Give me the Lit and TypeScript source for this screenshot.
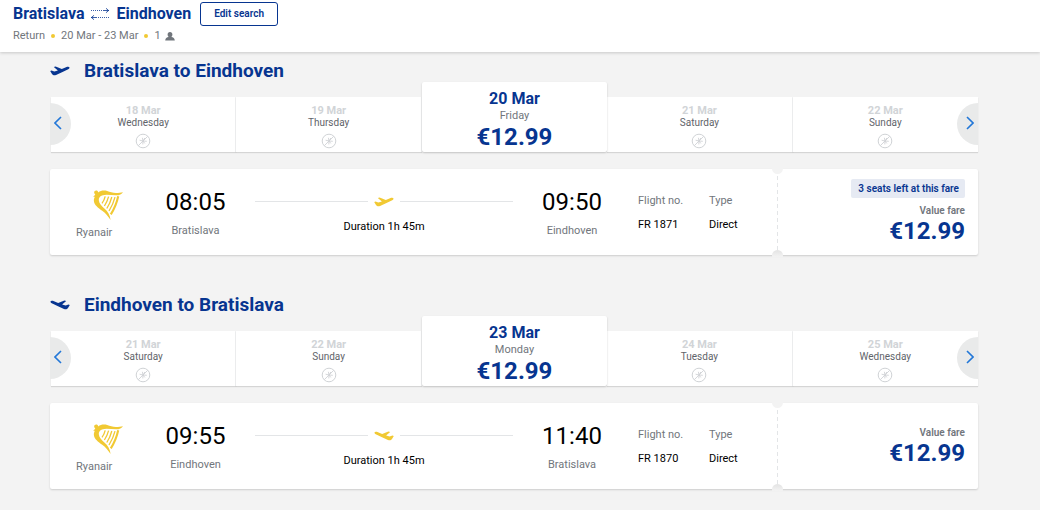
import { LitElement, html, svg, css } from "lit";
import { customElement, property } from "lit/decorators.js";

interface Day { date: string; weekday: string; price?: string; }
interface Trip {
  from: string; to: string; depart: string; arrive: string; flight: string;
  price: string; seats?: string; inbound: boolean; days: Day[];
}

const trips: Trip[] = [
  {
    from: "Bratislava", to: "Eindhoven", depart: "08:05", arrive: "09:50", flight: "FR 1871",
    price: "€12.99", seats: "3 seats left at this fare", inbound: false,
    days: [
      { date: "18 Mar", weekday: "Wednesday" },
      { date: "19 Mar", weekday: "Thursday" },
      { date: "20 Mar", weekday: "Friday", price: "€12.99" },
      { date: "21 Mar", weekday: "Saturday" },
      { date: "22 Mar", weekday: "Sunday" },
    ],
  },
  {
    from: "Eindhoven", to: "Bratislava", depart: "09:55", arrive: "11:40", flight: "FR 1870",
    price: "€12.99", inbound: true,
    days: [
      { date: "21 Mar", weekday: "Saturday" },
      { date: "22 Mar", weekday: "Sunday" },
      { date: "23 Mar", weekday: "Monday", price: "€12.99" },
      { date: "24 Mar", weekday: "Tuesday" },
      { date: "25 Mar", weekday: "Wednesday" },
    ],
  },
];

const planeShape = svg`<path d="M.2 5 1.6 4.6 4.3 5.6 7.9 4.4 3.8 1 5.6.5 11.8 2.9 16 1.3C17.6.7 19.2.7 19.5 1.5 19.8 2.3 18.7 3.1 17.2 3.8L12 6.2 6 9C4.3 9.6 2.9 9.3 2 8Z"/>`;

const plane = (inbound: boolean) => html`
  <svg class="plane" viewBox="0 0 20 10" width="20" height="10" aria-hidden="true">
    <g transform=${inbound ? "matrix(-1 0 0 1 20 0)" : "translate(0 0)"}>${planeShape}</g>
  </svg>`;

const harp = html`
  <svg class="harp" viewBox="0 0 30 30" width="30" height="30" aria-hidden="true">
    <path fill="#f1c933" d="M1.5 1.2C2.6.1 4.5.3 5 1.6L5.2 2.4C7.6.6 10.8.2 14.2 1 17 1.8 19.5 2.9 23 2.9 25.5 2.9 28 2.5 30 2.2 28.8 4.2 26.4 5.3 23.2 5.3 18 5.3 13.3 4 9 5.4 6.7 6.2 5.6 8.2 5.8 10.2 6.2 13.6 8.8 16 11.4 18.4 14.8 21.4 17 24.6 17.6 30 14.9 25.9 12.4 23 9.2 20.7 5 17.7 1.5 15 .9 11.2.7 9.6 1.1 8.2 1.9 6.8L.2 7.1 2.3 4.4C1.2 3.6.8 2.2 1.5 1.2Z"/>
    <g fill="none" stroke="#f1c933" stroke-width="1.3">
      <path d="M12.2 6.4C11.6 8.9 10.6 11.2 9 13.4M15.6 6.7C14.7 10 13.4 13 11.4 16M18.8 7C17.8 11 16.2 14.8 13.8 18.5M22 7.2C20.8 12 18.8 16.6 16 21"/>
      <path stroke-width="2.1" d="M25.2 6.3C23.8 13 21.6 18.4 17.8 24.4"/>
    </g>
  </svg>`;

const noFlight = html`
  <svg class="no-flight" viewBox="0 0 16 16" width="16" height="16" role="img" aria-label="No flights">
    <g fill="none" stroke="#d0d3d6">
      <circle cx="8" cy="8" r="6.8"/>
      <path stroke-width=".9" d="M3.3 12.7 12.7 3.3"/>
      <path stroke-width=".9" d="M4.6 7.2 8 8l3.8.3M7.4 4.8 8 8l-.2 3.4M9.8 5 8 8l1.8 2.4"/>
    </g>
  </svg>`;

const chevron = (right: boolean) => html`
  <svg viewBox="0 0 8 14" width="8" height="14" aria-hidden="true">
    <path d=${right ? "M1 1 7 7 1 13" : "M7 1 1 7 7 13"} fill="none" stroke="#2277d8" stroke-width="1.6"/>
  </svg>`;

@customElement("trip-header")
class TripHeader extends LitElement {
  static styles = css`
    :host { display: block; position: relative; background: #fff; box-shadow: 0 1px 3px rgba(0, 0, 0, 0.18); padding: 2px 13px 8px; }
    .route { display: flex; align-items: center; height: 24px; margin: 0; font-size: 16px; line-height: 24px; font-weight: 700; color: #073590; }
    .swap { margin: 0 6px; }
    .edit { box-sizing: border-box; height: 24px; margin: 0 0 0 9px; padding: 0 13px; border: 1px solid #073590; border-radius: 3px; background: #fff; color: #073590; font: 600 10px/20px Roboto, sans-serif; }
    .summary { display: flex; align-items: center; gap: 6px; margin: 0; padding-top: 2px; font-size: 11px; line-height: 16px; color: #71767c; }
    .dot { width: 4px; height: 4px; border-radius: 50%; background: #f1c933; }
    .people { display: flex; align-items: center; gap: 4px; }
  `;
  render() {
    return html`
      <h1 class="route">
        <span>Bratislava</span>
        <svg class="swap" viewBox="0 0 20 12" width="20" height="12" aria-hidden="true">
          <g fill="none" stroke="#073590" stroke-width=".8">
            <path stroke-dasharray="1 1" d="M1 2.5H14"/>
            <path d="M14 2.5h5M16 .3 18.6 2.5 16 4.7"/>
            <path stroke-dasharray="1 1" d="M6 9.5H19"/>
            <path d="M1 9.5h5M4 7.3 1.4 9.5 4 11.7"/>
          </g>
        </svg>
        <span>Eindhoven</span>
        <button class="edit" type="button">Edit search</button>
      </h1>
      <p class="summary">
        <span>Return</span><span class="dot"></span><span>20 Mar - 23 Mar</span><span class="dot"></span>
        <span class="people">1
          <svg viewBox="0 0 10 9" width="10" height="9" aria-label="passenger" role="img">
            <path fill="#71767c" d="M5 0C6.5 0 7.4 1 7.4 2.4 7.4 3.5 6.9 4.4 6.3 4.9 8.3 5.3 9.6 5.8 9.8 8.5H.2C.4 5.8 1.7 5.3 3.7 4.9 3.1 4.4 2.6 3.5 2.6 2.4 2.6 1 3.5 0 5 0Z"/>
          </svg>
        </span>
      </p>`;
  }
}

@customElement("day-strip")
class DayStrip extends LitElement {
  @property({ attribute: false }) days: Day[] = [];
  static styles = css`
    :host { display: block; position: relative; }
    .days { display: grid; grid-template-columns: repeat(5, 1fr); align-items: end; padding-left: 1px; }
    .day { box-sizing: border-box; display: flex; flex-direction: column; align-items: center; height: 55px; padding: 7px 0 0; border: 0; border-right: 1px solid #f0f1f2; background: #fff; box-shadow: 0 1px 1px rgba(0, 0, 0, 0.12); font-family: Roboto, sans-serif; }
    .day:last-child { border-right: 0; }
    .date { font-size: 11px; line-height: 13px; font-weight: 700; color: #d1d4d7; }
    .weekday { font-size: 10px; line-height: 12px; color: #5f646a; }
    .no-flight { margin-top: 4px; }
    .active { position: relative; height: 70px; padding-top: 7px; border: 0; border-radius: 2px; box-shadow: 0 1px 2px rgba(0, 0, 0, 0.2); }
    .active .date { font-size: 16px; line-height: 20px; color: #073590; }
    .active .weekday { font-size: 11px; line-height: 14px; color: #71767c; }
    .active .price { font-size: 24px; line-height: 28px; font-weight: 700; color: #073590; }
    .arrow { position: absolute; top: 21px; display: flex; align-items: center; width: 21px; height: 42px; padding: 0 4px 2px; border: 0; background: #e9eaea; box-sizing: border-box; }
    .prev { left: 0; border-radius: 0 21px 21px 0; }
    .next { right: 0; border-radius: 21px 0 0 21px; justify-content: flex-end; }
  `;
  render() {
    return html`
      <div class="days">
        ${this.days.map((d) => d.price
          ? html`<button type="button" class="day active" aria-pressed="true"><span class="date">${d.date}</span><span class="weekday">${d.weekday}</span><span class="price">${d.price}</span></button>`
          : html`<button type="button" class="day"><span class="date">${d.date}</span><span class="weekday">${d.weekday}</span>${noFlight}</button>`)}
      </div>
      <button type="button" class="arrow prev" aria-label="Earlier dates">${chevron(false)}</button>
      <button type="button" class="arrow next" aria-label="Later dates">${chevron(true)}</button>`;
  }
}

@customElement("flight-card")
class FlightCard extends LitElement {
  @property({ attribute: false }) trip!: Trip;
  static styles = css`
    :host { display: flex; min-height: 86px; background: #fff; border-radius: 2px; box-shadow: 0 1px 2px rgba(0, 0, 0, 0.16); }
    .details { flex: 1; display: grid; grid-template-columns: 100px 91px 1fr 90px 92px 68px; }
    .carrier { display: flex; flex-direction: column; align-items: flex-start; padding: 21px 0 0 26px; color: #71767c; font-size: 11px; line-height: 14px; }
    .harp { margin: 0 0 6px 17px; }
    .stop { display: flex; flex-direction: column; align-items: center; padding-top: 19px; }
    .time { font-size: 24px; line-height: 28px; color: #000; }
    .city { margin-top: 8px; font-size: 11px; line-height: 14px; color: #71767c; }
    .journey { display: flex; flex-direction: column; align-items: center; padding: 28px 14px 0; font-size: 11px; line-height: 14px; color: #000; }
    .track { display: flex; align-items: center; align-self: stretch; gap: 6px; height: 10px; margin-bottom: 13px; }
    .line { flex: 1; height: 1px; margin-bottom: 2px; background: #e3e5e7; }
    .plane { fill: #f1c933; }
    dl { margin: 0; padding-top: 25px; font-size: 11px; line-height: 14px; }
    .number { padding-left: 21px; }
    dt { color: #71767c; }
    dd { margin: 10px 0 0; color: #000; }
    .tear { position: relative; width: 1px; overflow: visible; background: repeating-linear-gradient(#e3e5e7 0 4px, transparent 4px 7px); }
    .notch { position: absolute; left: -5px; width: 11px; height: 6px; background: #f3f3f3; }
    .top { top: -1px; border-radius: 0 0 6px 6px; }
    .bottom { bottom: -2px; height: 7px; border-radius: 6px 6px 0 0; background: linear-gradient(#e3e3e3, #f3f3f3); }
    .fare { box-sizing: border-box; width: 200px; display: flex; flex-direction: column; align-items: flex-end; justify-content: center; padding-right: 13px; color: #073590; }
    .seats { margin-bottom: 6px; padding: 3px 6px 3px 7px; border-radius: 2px; background: #e6eaf3; font-size: 10px; line-height: 13px; font-weight: 600; }
    .label { font-size: 10px; line-height: 13px; font-weight: 600; color: #71767c; }
    .price { font-size: 24px; line-height: 28px; font-weight: 700; }
  `;
  render() {
    const t = this.trip;
    return html`
      <div class="details">
        <div class="carrier">${harp}<span>Ryanair</span></div>
        <div class="stop"><span class="time">${t.depart}</span><span class="city">${t.from}</span></div>
        <div class="journey">
          <div class="track"><span class="line"></span>${plane(t.inbound)}<span class="line"></span></div>
          <span>Duration 1h 45m</span>
        </div>
        <div class="stop"><span class="time">${t.arrive}</span><span class="city">${t.to}</span></div>
        <dl class="number"><dt>Flight no.</dt><dd>${t.flight}</dd></dl>
        <dl><dt>Type</dt><dd>Direct</dd></dl>
      </div>
      <div class="tear"><span class="notch top"></span><span class="notch bottom"></span></div>
      <div class="fare">
        ${t.seats ? html`<span class="seats">${t.seats}</span>` : ""}
        <span class="label">Value fare</span>
        <span class="price">${t.price}</span>
      </div>`;
  }
}

@customElement("app-root")
class AppRoot extends LitElement {
  static styles = css`
    :host { display: block; min-height: 100vh; background: #f3f3f3; font-family: Roboto, sans-serif; }
    main { padding: 0 62px 20px 50px; }
    .trip { padding-top: 8px; }
    .trip + .trip { padding-top: 39px; }
    h2 { display: flex; align-items: center; gap: 14px; margin: 0; font-size: 19px; line-height: 22px; font-weight: 700; color: #073590; }
    .plane { fill: #073590; }
    flight-card { margin-top: 17px; }
  `;
  render() {
    return html`
      <trip-header></trip-header>
      <main>
        ${trips.map((t) => html`
          <section class="trip">
            <h2>${plane(t.inbound)}<span>${t.from} to ${t.to}</span></h2>
            <day-strip .days=${t.days}></day-strip>
            <flight-card .trip=${t}></flight-card>
          </section>`)}
      </main>`;
  }
}
